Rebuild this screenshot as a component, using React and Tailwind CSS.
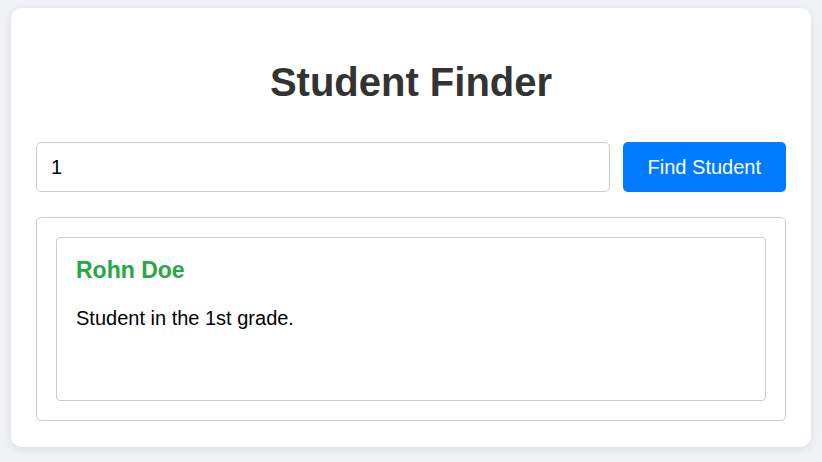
export default function App() {
  return (
    <div
      className="min-h-[462px] bg-[#f0f2f5] pt-[8px]"
      style={{ fontFamily: '"Liberation Sans", Arial, sans-serif' }}
    >
      <div className="mx-auto w-[800px] rounded-[10px] bg-white px-[25px] pt-[25px] pb-[26px] shadow-[0_2px_8px_rgba(0,0,0,0.1)]">
        <h1 className="mt-[26px] mb-[37px] text-center text-[40px] font-bold leading-[46px] text-[#333]">
          Student Finder
        </h1>

        <div className="flex gap-[13px]">
          <input
            type="text"
            defaultValue="1"
            className="h-[50px] flex-1 rounded-[5px] border border-[#ccc] px-[14px] text-[20px] text-black outline-none"
          />
          <button className="h-[50px] rounded-[5px] bg-[#007bff] px-[25px] text-[20px] text-white">
            Find Student
          </button>
        </div>

        <div className="mt-[25px] rounded-[5px] border border-[#ccc] p-[19px]">
          <div className="h-[164px] rounded-[4px] border border-[#ccc] px-[19px] pt-[19px]">
            <h3 className="text-[23px] font-bold leading-[26px] text-[#28a745]">Rohn Doe</h3>
            <p className="mt-[24px] text-[20px] leading-[23px] text-black">
              Student in the 1st grade.
            </p>
          </div>
        </div>
      </div>
    </div>
  );
}
